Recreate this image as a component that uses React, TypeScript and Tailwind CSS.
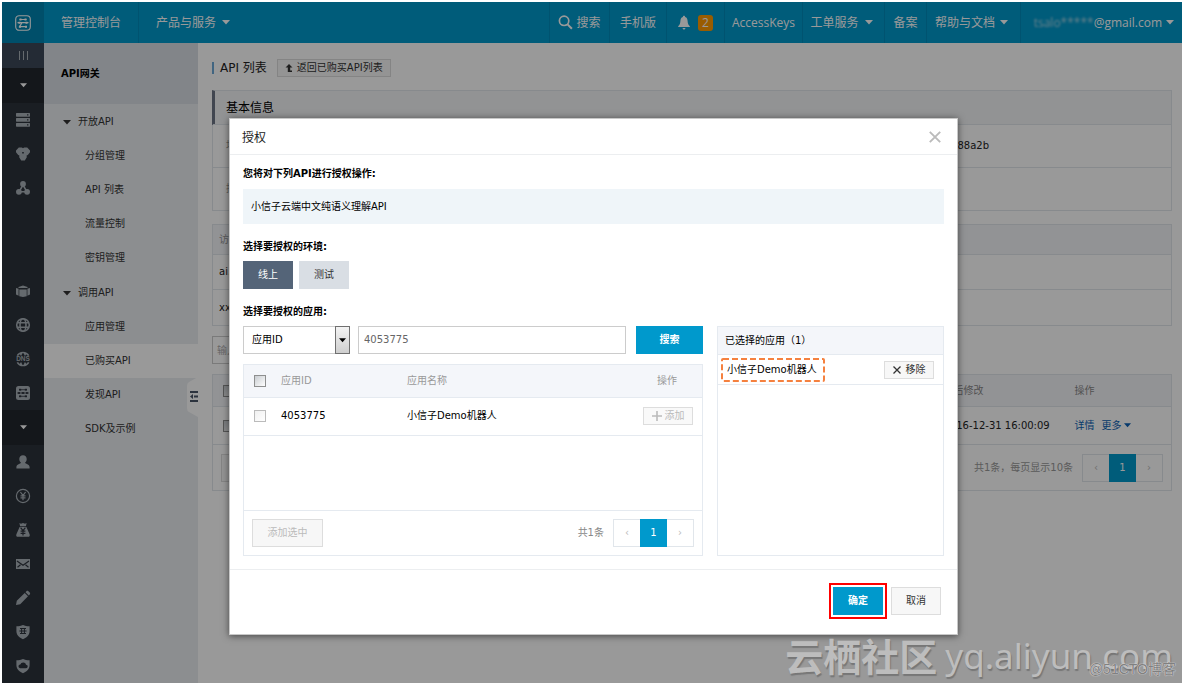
import type { ReactNode } from "react";

function Caret({ className = "w-2" }: { className?: string }) {
  return (
    <svg viewBox="0 0 8 5" className={`h-[5px] shrink-0 ${className}`} fill="currentColor" aria-hidden="true">
      <path d="M0 0h8L4 4.6z" />
    </svg>
  );
}

function Icon({ children }: { children: ReactNode }) {
  return (
    <svg viewBox="0 0 16 16" className="size-4" fill="currentColor" aria-hidden="true">
      {children}
    </svg>
  );
}

const servers = (
  <Icon>
    <path
      fillRule="evenodd"
      d="M1.500 1h13l.5.5v2.700l-.5.5h-13l-.5-.5V1.500zM1.500 6h13l.5.5v2.700l-.5.5h-13l-.5-.5V6.500zM1.500 11h13l.5.5v2.700l-.5.5h-13l-.5-.5v-2.700zM12 2.300v1.200h1.400V2.300zM12 7.300v1.200h1.400V7.300zM12 12.300v1.200h1.400v-1.200z"
    />
  </Icon>
);
const blobs = (
  <Icon>
    <path
      fillRule="evenodd"
      d="M3.800 1.500h3L8 2.200l1.200-.7h3L15 4.400v1.800L12.800 9l-1.200.6.2 1.600-2 3.300H6.200l-2-3.300.2-1.600L3.200 9 1 6.200V4.400zM7.200 6v1.600h1.600V6z"
    />
  </Icon>
);
const nodes = (
  <Icon>
    <circle cx="8" cy="4" r="2.900" />
    <circle cx="3.900" cy="11.800" r="2.900" />
    <circle cx="12.100" cy="11.800" r="2.900" />
    <path d="M8 5 4 11.800h8z" fill="none" stroke="currentColor" strokeWidth="1.500" />
  </Icon>
);
const box = (
  <Icon>
    <path d="M8 2.500 12.500 4v1h-9V4z" />
    <path d="M1 5l2.600.8v7L1 11.500zM15 5l-2.600.8v7l2.600-1.300zM4.300 6.500h7.400v6.700L8 14l-3.700-.8z" />
  </Icon>
);
const globe = (
  <Icon>
    <g fill="none" stroke="currentColor" strokeWidth="1.600">
      <circle cx="8" cy="8" r="6.300" />
      <ellipse cx="8" cy="8" rx="3" ry="6.300" />
      <path d="M2 5.700h12M2 10.300h12" />
    </g>
  </Icon>
);
const dns = (
  <Icon>
    <path
      d="M2.300 4.700a6.600 6.600 0 0 1 11.400 0M2.300 11.300a6.600 6.600 0 0 0 11.400 0M5.600 4.400 6.600 1.800M10.400 4.400 9.400 1.800M5.600 11.600l1 2.600M10.400 11.600l-1 2.600"
      fill="none"
      stroke="currentColor"
      strokeWidth="1.600"
    />
    <text x="8" y="10.300" fontSize="6.500" fontWeight="700" textAnchor="middle" fontFamily="Liberation Sans, sans-serif">
      DNS
    </text>
  </Icon>
);
const gateway = (
  <Icon>
    <rect x="1" y="1" width="14" height="14" rx="2.500" />
    <g fill="#2d333c">
      <rect x="4" y="3.800" width="2.200" height="1.800" />
      <rect x="9.800" y="3.800" width="2.200" height="1.800" />
      <rect x="2.600" y="7.100" width="2.400" height="1.800" />
      <rect x="6.800" y="7.100" width="2.400" height="1.800" />
      <rect x="11" y="7.100" width="2.400" height="1.800" />
      <rect x="4" y="10.400" width="2.200" height="1.800" />
      <rect x="9.800" y="10.400" width="2.200" height="1.800" />
    </g>
    <path d="M5 4.700h6M4 8h8M5 11.300h6" stroke="#2d333c" strokeWidth=".8" />
  </Icon>
);
const user = (
  <Icon>
    <path d="M8 1.300c2.200 0 3.700 1.500 3.700 3.600 0 1.600-.7 3-1.700 3.800.2.900 4.600 1.400 4.600 4.400v1.400H1.400v-1.400c0-3 4.400-3.500 4.600-4.400-1-.8-1.700-2.200-1.700-3.800 0-2.100 1.500-3.600 3.700-3.600z" />
  </Icon>
);
const yuan = (
  <Icon>
    <g fill="none" stroke="currentColor" strokeWidth="1.200">
      <circle cx="8" cy="8" r="6.600" />
      <path d="M5.400 4 8 7.400 10.600 4M8 7.400v4.800M5.500 7.800h5M5.500 9.900h5" />
    </g>
  </Icon>
);
const bag = (
  <Icon>
    <path d="M4.400 1 6 1.700 8 1l2 .7 1.600-.7-.7 3.200H5.100zM4.600 5h6.800l3.200 7.200c.5 1.500 0 2.600-1.400 2.600H2.800c-1.400 0-1.900-1.100-1.400-2.600z" />
    <path d="M5.600 5.600 8 8.600l2.400-3M8 8.600v5M5.600 9.200h4.800M5.600 11.300h4.800" fill="none" stroke="#2d333c" strokeWidth="1.200" />
  </Icon>
);
const mail = (
  <Icon>
    <path d="M1 3h14v10H1z" />
    <path d="M2 5l6 4.200L14 5M2.500 11.200l3-2.400M13.500 11.200l-3-2.400" fill="none" stroke="#2d333c" strokeWidth="1.200" />
  </Icon>
);
const pencil = (
  <Icon>
    <path d="m1 15 .8-4.200L9.700 3l3.300 3.300-7.800 7.900zM10.500 2.200l.9-.9c.6-.6 1.400-.6 2 0l1.300 1.300c.6.6.6 1.400 0 2l-.9.9z" />
  </Icon>
);
const shieldGrid = (
  <Icon>
    <path d="M8 1c1.800.9 4 1.200 6.600 1.300v5c0 3.800-2.800 6.300-6.600 7.900-3.800-1.600-6.600-4.100-6.600-7.900v-5C4 2.200 6.200 1.900 8 1z" />
    <path d="M5 4.500h6M4.400 7h7.200M5 9.500h6M6.600 4v6M9.400 4v6" fill="none" stroke="#2d333c" strokeWidth="1" />
  </Icon>
);
const shieldCloud = (
  <Icon>
    <path
      fillRule="evenodd"
      d="M8 1c1.800.9 4 1.200 6.600 1.300v5c0 3.800-2.800 6.300-6.600 7.900-3.800-1.600-6.600-4.100-6.600-7.900v-5C4 2.200 6.200 1.900 8 1zM5.200 10.200h5.700a1.700 1.700 0 0 0 .2-3.400A3 3 0 0 0 5.300 6.600a1.800 1.800 0 0 0-.1 3.600z"
    />
  </Icon>
);

const railTop = [servers, blobs, nodes];
const railMiddle = [box, globe, dns, gateway];
const railBottom = [user, yuan, bag, mail, pencil, shieldGrid, shieldCloud];

function RailItems({ items }: { items: ReactNode[] }) {
  return (
    <ul>
      {items.map((icon, i) => (
        <li key={i} className="flex h-[34px] items-center justify-center">
          {icon}
        </li>
      ))}
    </ul>
  );
}

function RailToggle() {
  return (
    <div className="flex h-[35px] items-center justify-center bg-[#22272e] text-white">
      <Caret className="w-[7px]" />
    </div>
  );
}

function Rail() {
  return (
    <aside className="w-[42px] shrink-0 bg-[#2c323b] text-[#a9b1b8]">
      <div className="flex h-[25px] items-center justify-center gap-[3px] bg-[#3c4859]">
        <span className="h-[9px] w-px bg-current" />
        <span className="h-[9px] w-px bg-current" />
        <span className="h-[9px] w-px bg-current" />
      </div>
      <RailToggle />
      <RailItems items={railTop} />
      <div className="h-[69px]" />
      <RailItems items={railMiddle} />
      <RailToggle />
      <RailItems items={railBottom} />
    </aside>
  );
}

const navCell = "flex h-full shrink-0 items-center justify-center border-l border-[#008bbb]";

function Header() {
  return (
    <header className="flex h-[41px] items-center bg-[#0099cc] text-xs text-white">
      <a href="#home" aria-label="首页" className="flex h-full w-[42px] shrink-0 items-center justify-center bg-[#0084b1]">
        <svg viewBox="0 0 16 16" className="size-4" fill="none" stroke="currentColor" aria-hidden="true">
          <rect x=".7" y=".7" width="14.600" height="14.600" rx="3.500" strokeWidth="1.100" />
          <path d="M4.500 4.500h7M2.500 7.700h11M7 7.700l-2.500 4h7.500" strokeWidth="1.200" />
          <path
            d="M4.500 3.500h2v2h-2zM9.500 3.500h2v2h-2zM3.500 6.700h2v2h-2zM10.500 6.700h2v2h-2zM4 10.700h2v2H4zM10 10.700h2v2h-2z"
            fill="currentColor"
            stroke="none"
          />
        </svg>
      </a>
      <a href="#console" className="flex h-full w-[94px] shrink-0 items-center justify-center">
        管理控制台
      </a>
      <a href="#products" className={`${navCell} gap-[6px] px-[17px]`}>
        产品与服务
        <Caret />
      </a>
      <nav className="ml-auto flex h-full">
        <a href="#search" className={`${navCell} w-[60px] gap-[3px]`}>
          <svg viewBox="0 0 16 16" className="size-[15px]" fill="none" stroke="currentColor" aria-hidden="true">
            <circle cx="6.500" cy="6.200" r="5" strokeWidth="1.800" />
            <path d="m10.200 10 4.600 4.700" strokeWidth="2.200" />
          </svg>
          搜索
        </a>
        <a href="#mobile" className={`${navCell} w-[57px]`}>
          手机版
        </a>
        <a href="#messages" className={`${navCell} w-[58px] gap-2`}>
          <svg viewBox="0 0 12 16" className="h-4 w-3" fill="currentColor" aria-hidden="true">
            <path d="M6 .8c.7 0 1.100.5 1.100 1.100C9 2.500 9.500 4 9.600 6c.1 2.800.9 4 2.200 5.300V12H.2v-.7C1.500 10 2.300 8.800 2.400 6c.1-2 .6-3.500 2.500-4.100C4.900 1.300 5.300.8 6 .8zM4.500 13h3c-.1.900-.7 1.500-1.500 1.500S4.600 13.900 4.500 13z" />
          </svg>
          <span className="flex h-4 w-[15px] items-center justify-center rounded-[3px] bg-[#ff9900]">2</span>
        </a>
        <a href="#keys" className={`${navCell} w-[78px]`}>
          AccessKeys
        </a>
        <a href="#tickets" className={`${navCell} w-[82px] gap-[6px] pr-1`}>
          工单服务
          <Caret />
        </a>
        <a href="#record" className={`${navCell} w-[42px]`}>
          备案
        </a>
        <a href="#docs" className={`${navCell} w-[94px] gap-[5px] pr-1`}>
          帮助与文档
          <Caret />
        </a>
        <a href="#account" className={`${navCell} w-[162px] justify-end pr-2`}>
          <span className="text-[#b5dbe9] blur-[1px]">tsalo*****</span>
          @gmail.com
          <Caret className="ml-1 w-2" />
        </a>
      </nav>
    </header>
  );
}

function NavGroup({ title, items, selected }: { title: string; items: string[]; selected?: string }) {
  return (
    <section className="pt-px">
      <h3 className="flex h-[34px] items-center gap-[7px] pl-[19px]">
        <Caret />
        {title}
      </h3>
      <ul>
        {items.map((item) => (
          <li key={item}>
            <a
              href={`#${item}`}
              className={`flex h-[34px] items-center pl-[41px] ${item === selected ? "bg-white" : ""}`}
            >
              {item}
            </a>
          </li>
        ))}
      </ul>
    </section>
  );
}

function SideNav() {
  return (
    <aside className="relative w-[154px] shrink-0 bg-[#eaedf1] text-[#333]">
      <h2 className="flex h-[61px] items-center bg-[#d9dee4] pl-[17px] font-bold text-black">API网关</h2>
      <NavGroup title="开放API" items={["分组管理", "API 列表", "流量控制", "密钥管理"]} />
      <NavGroup
        title="调用API"
        items={["应用管理", "已购买API", "发现API", "SDK及示例"]}
        selected="已购买API"
      />
      <button type="button" aria-label="收起导航" className="absolute top-[334px] right-0 h-10 w-[11px]">
        <svg viewBox="0 0 11 40" className="h-10 w-[11px]" aria-hidden="true">
          <path d="M11 0 2 5Q0 6 0 9v22q0 3 2 4l9 5z" fill="#fff" />
          <path d="M3 15h8M7 19.500h4M3 24h8" stroke="#4a5568" strokeWidth="2" />
          <path d="M6 17v5l-3-2.500z" fill="#4a5568" />
        </svg>
      </button>
    </aside>
  );
}

function Pager() {
  return (
    <div className="flex h-7 text-[#bbb]">
      <button type="button" aria-label="上一页" className="w-[27px] border border-r-0 border-[#e1e6eb]">
        ‹
      </button>
      <button type="button" aria-current="page" className="w-[27px] bg-[#0099cc] text-white">
        1
      </button>
      <button type="button" aria-label="下一页" className="w-[27px] border border-l-0 border-[#e1e6eb]">
        ›
      </button>
    </div>
  );
}

function Check({ label, muted = false }: { label: string; muted?: boolean }) {
  return (
    <input
      type="checkbox"
      aria-label={label}
      className={`block size-3 appearance-none border bg-linear-to-br ${
        muted ? "border-[#bbb] from-[#f0f0f0] to-white" : "border-[#8e8f8f] from-[#c9cdd1] to-white"
      }`}
    />
  );
}

function Background() {
  return (
    <main className="min-w-0 flex-1 bg-white pr-[10px] pl-[14px] text-[#222]">
      <div className="mt-[15px] flex h-[20px] items-center gap-[10px]">
        <h1 className="border-l-2 border-[#6da9d8] pl-[6px] text-xs leading-3">API 列表</h1>
        <button
          type="button"
          className="flex h-[18px] items-center gap-1 border border-[#ddd] bg-[#f7f7f7] px-[7px] text-[#333]"
        >
          <svg viewBox="0 0 8 9" className="h-[9px] w-2" fill="currentColor" aria-hidden="true">
            <path d="M4 0 7.500 3.500H5.200V6.500H7V8H2.800V3.500H.5z" />
          </svg>
          返回已购买API列表
        </button>
      </div>

      <section className="mt-3 border border-[#e1e6eb]">
        <h2 className="-my-px -ml-px flex h-[35px] items-center border-y border-l-[3px] border-[#e1e6eb] border-l-[#6d7686] bg-[#f4f5f7] pl-[11px] text-xs text-black">
          基本信息
        </h2>
        <div className="flex h-[43px] items-center border-t border-[#e1e6eb]">
          <span className="flex-1 pl-[13px] text-[#999]">地域</span>
          <span className="pr-[182px]">a88a2b</span>
        </div>
        <div className="flex h-[43px] items-center border-t border-[#e1e6eb] pl-[13px] text-[#999]">描述</div>
      </section>

      <table className="mt-[13px] w-full border-collapse border border-[#e1e6eb] text-left">
        <thead>
          <tr className="h-[30px] bg-[#f4f5f9] text-[#999]">
            <th className="border-b border-[#e1e6eb] pl-[6px] font-normal">访问</th>
          </tr>
        </thead>
        <tbody>
          <tr className="h-[35px]">
            <td className="border-b border-[#e1e6eb] pl-[6px]">ai.</td>
          </tr>
          <tr className="h-[36px]">
            <td className="pl-[6px]">xxz</td>
          </tr>
        </tbody>
      </table>

      <input
        type="text"
        aria-label="输入查询"
        placeholder="输入"
        className="mt-[10px] block h-7 w-[200px] border border-[#ccc] px-1 placeholder:text-[#aaa]"
      />

      <table className="mt-[10px] w-full table-fixed border-collapse border border-[#e1e6eb] text-left">
        <colgroup>
          <col />
          <col className="w-[131px]" />
          <col className="w-[97px]" />
        </colgroup>
        <thead>
          <tr className="h-[32px] bg-[#f4f5f9] text-[#888]">
            <th className="pl-[10px]">
              <Check label="全选" />
            </th>
            <th className="font-normal">最后修改</th>
            <th className="font-normal">操作</th>
          </tr>
        </thead>
        <tbody>
          <tr className="h-[38px] border-y border-[#e1e6eb]">
            <td className="pl-[10px]">
              <Check label="选择" />
            </td>
            <td className="whitespace-nowrap">2016-12-31 16:00:09</td>
            <td className="text-[#0a5fb4]">
              <div className="flex items-center gap-[7px]">
                <a href="#detail">详情</a>
                <a href="#more" className="flex items-center gap-[2px]">
                  更多
                  <Caret className="w-[7px]" />
                </a>
              </div>
            </td>
          </tr>
        </tbody>
      </table>
      <div className="flex h-[46px] items-center gap-[9px] border border-t-0 border-[#e1e6eb] px-2 text-[#999]">
        <button type="button" className="h-7 border border-[#ddd] bg-[#f7f7f7] px-[14px]">
          批量
        </button>
        <span className="ml-auto">共1条，每页显示10条</span>
        <Pager />
      </div>
    </main>
  );
}

const cellLine = "border-[#e5eaf0]";

function AuthorizeDialog() {
  return (
    <div
      role="dialog"
      aria-modal="true"
      aria-labelledby="dialog-title"
      className="w-[729px] border border-[#c8c8c8] bg-white text-black shadow-[0_1px_7px_rgba(0,0,0,0.55)]"
    >
      <div className="flex h-9 items-center justify-between border-b border-[#eceef0] px-3">
        <h2 id="dialog-title" className="pt-[3px] text-xs text-[#222]">
          授权
        </h2>
        <button type="button" aria-label="关闭" className="mr-1 text-[#bbb]">
          <svg viewBox="0 0 12 12" className="size-3" fill="none" stroke="currentColor" strokeWidth="1.900" aria-hidden="true">
            <path d="m.8.8 10.400 10.400M11.200.8.8 11.200" />
          </svg>
        </button>
      </div>

      <div className="px-[13px] pb-[13px]">
        <h3 className="flex h-[34px] items-center pt-[3px] font-bold">您将对下列API进行授权操作:</h3>
        <p className="flex h-[35px] items-center bg-[#eff5f9] px-2">小信子云端中文纯语义理解API</p>

        <h3 className="mt-[5px] flex h-8 items-center pt-[3px] font-bold">选择要授权的环境:</h3>
        <div className="flex gap-[6px]">
          <button type="button" className="h-7 w-[50px] bg-[#546478] text-white">
            线上
          </button>
          <button type="button" className="h-7 w-[50px] bg-[#d9dee4] text-[#333]">
            测试
          </button>
        </div>

        <h3 className="mt-[5px] flex h-8 items-center pt-[3px] font-bold">选择要授权的应用:</h3>
        <div className="flex gap-[14px]">
          <div className="flex min-w-0 flex-1 flex-col gap-[10px]">
            <div className="flex h-7">
              <div className="relative mr-2 w-[107px]">
                <select aria-label="查询条件" className="h-7 w-full appearance-none border border-[#ccc] bg-white pl-2">
                  <option>应用ID</option>
                </select>
                <span className="pointer-events-none absolute inset-y-0 right-0 flex w-[15px] items-center justify-center border border-[#707070] bg-linear-to-b from-[#f4f4f4] to-[#cfcfcf]">
                  <Caret className="w-[7px]" />
                </span>
              </div>
              <input
                type="text"
                aria-label="应用ID"
                defaultValue="4053775"
                className="min-w-0 flex-1 border border-[#ccc] px-[5px] text-[#666]"
              />
              <button type="button" className="ml-[10px] w-[67px] bg-[#0099cc] font-bold text-white">
                搜索
              </button>
            </div>

            <div className={`border ${cellLine}`}>
              <div className="h-[145px]">
                <table className="w-full table-fixed border-collapse text-left">
                  <colgroup>
                    <col className="w-[37px]" />
                    <col className="w-[126px]" />
                    <col />
                    <col className="w-[59px]" />
                  </colgroup>
                  <thead>
                    <tr className={`h-8 border-b bg-[#f4f6fa] text-[#999] ${cellLine}`}>
                      <th className="pl-[10px]">
                        <Check label="全选应用" />
                      </th>
                      <th className="font-normal">应用ID</th>
                      <th className="font-normal">应用名称</th>
                      <th className="pl-[14px] font-normal">操作</th>
                    </tr>
                  </thead>
                  <tbody>
                    <tr className={`h-[38px] border-b ${cellLine}`}>
                      <td className="pl-[10px]">
                        <Check label="选择应用" muted />
                      </td>
                      <td>4053775</td>
                      <td>小信子Demo机器人</td>
                      <td>
                        <button
                          type="button"
                          disabled
                          className="flex h-[18px] w-[50px] items-center justify-center gap-[3px] border border-[#ddd] bg-[#f9f9f9] text-[#bbb]"
                        >
                          <svg viewBox="0 0 10 10" className="size-[10px]" stroke="currentColor" strokeWidth="1.600" aria-hidden="true">
                            <path d="M5 0v10M0 5h10" />
                          </svg>
                          添加
                        </button>
                      </td>
                    </tr>
                  </tbody>
                </table>
              </div>
              <div className={`flex h-[45px] items-center gap-[9px] border-t px-2 ${cellLine}`}>
                <button type="button" disabled className="h-7 w-[71px] border border-[#ddd] bg-[#f7f7f7] text-[#bbb]">
                  添加选中
                </button>
                <span className="ml-auto text-[#888]">共1条</span>
                <Pager />
              </div>
            </div>
          </div>

          <section className={`w-[227px] border ${cellLine}`}>
            <h4 className={`flex h-7 items-center border-b bg-[#f4f6fa] px-[7px] ${cellLine}`}>已选择的应用（1）</h4>
            <div className={`flex h-[30px] items-center justify-between border-b pr-[9px] pl-[3px] ${cellLine}`}>
              <span className="relative flex h-6 w-[104px] items-center pl-[6px]">
                小信子Demo机器人
                <svg className="absolute inset-0 size-full" fill="none" aria-hidden="true">
                  <rect
                    x="1"
                    y="1"
                    width="102"
                    height="22"
                    rx="1"
                    stroke="#f5813f"
                    strokeWidth="2"
                    strokeDasharray="6 3"
                  />
                </svg>
              </span>
              <button
                type="button"
                className="flex h-[18px] w-[50px] items-center justify-center gap-[5px] border border-[#ddd] bg-[#f7f7f7] text-[#333]"
              >
                <svg viewBox="0 0 8 8" className="size-2" stroke="currentColor" strokeWidth="1.300" aria-hidden="true">
                  <path d="m.5.5 7 7M7.500.5l-7 7" />
                </svg>
                移除
              </button>
            </div>
          </section>
        </div>
      </div>

      <div className="flex h-[65px] items-center justify-end gap-1 border-t border-[#eceef0] pr-4 pb-[3px]">
        <div className="border-2 border-[#ff0000] p-[2px]">
          <button type="button" className="block h-7 w-[50px] bg-[#0099cc] font-bold text-white">
            确定
          </button>
        </div>
        <button type="button" className="h-7 w-[50px] border border-[#ddd] bg-[#f7f7f7] text-[#333]">
          取消
        </button>
      </div>
    </div>
  );
}

export default function App() {
  return (
    <div className="flex min-h-screen bg-white p-0.5 font-['DejaVu_Sans','Noto_Sans_CJK_SC',sans-serif] text-[10px] leading-4">
      <div className="relative flex min-w-0 flex-1 flex-col overflow-hidden">
        <div className="font-['Open_Sans','Noto_Sans_CJK_SC',sans-serif]">
          <Header />
        </div>
        <div className="flex flex-1">
          <Rail />
          <SideNav />
          <Background />
        </div>

        <div className="absolute inset-0 flex items-start justify-center bg-black/40 pt-[116px] pl-[3px]">
          <AuthorizeDialog />
        </div>

        <div className="pointer-events-none absolute right-[9px] bottom-0 flex h-[54px] items-center gap-2 font-['Noto_Sans','Noto_Sans_CJK_SC',sans-serif] text-[#bdbdbd] [text-shadow:1px_2px_1px_#777]">
          <span className="text-[38px] font-bold">云栖社区</span>
          <span className="text-[35px]">yq.aliyun.com</span>
        </div>
        <div className="pointer-events-none absolute right-[6px] bottom-[6px] font-['Liberation_Sans','Noto_Sans_CJK_SC',sans-serif] text-[14px] text-[#808080] [text-shadow:0_0_1px_#e5e5e5,0_0_1px_#e5e5e5]">
          @51CTO博客
        </div>
      </div>
    </div>
  );
}
